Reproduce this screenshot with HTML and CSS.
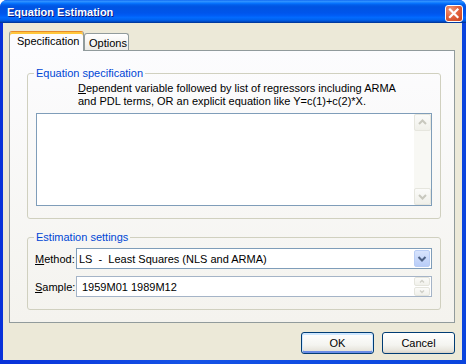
FILE: index.html
```html
<!DOCTYPE html>
<html>
<head>
<meta charset="utf-8">
<link rel="stylesheet" href="styles.css">
</head>
<body>
<div class="window">
  <div class="titlebar">
    <span class="title">Equation Estimation</span>
    <span class="close">
      <svg width="16" height="15" viewBox="0 0 16 15"><path d="M4 3.5 L11.5 11 M11.5 3.5 L4 11" stroke="#fff" stroke-width="2.2" stroke-linecap="square" fill="none"/></svg>
    </span>
  </div>
  <div class="frame">
    <div class="client">
      <div class="tabs">
        <div class="tab active">Specification</div>
        <div class="tab">Options</div>
      </div>
      <div class="panel">
        <fieldset class="group g1">
          <legend>Equation specification</legend>
          <p class="desc"><u>D</u>ependent variable followed by list of regressors including ARMA<br>and PDL terms, OR an explicit equation like Y=c(1)+c(2)*X.</p>
          <div class="textbox">
            <div class="vscroll">
              <div class="sbtn"><svg width="15" height="15" viewBox="0 0 15 15"><path d="M4 9 L7.5 5.5 L11 9" stroke="#C8C8BE" stroke-width="2" fill="none"/></svg></div>
              <div class="track"></div>
              <div class="sbtn"><svg width="15" height="15" viewBox="0 0 15 15"><path d="M4 6 L7.5 9.5 L11 6" stroke="#C8C8BE" stroke-width="2" fill="none"/></svg></div>
            </div>
          </div>
        </fieldset>
        <fieldset class="group g2">
          <legend>Estimation settings</legend>
          <div class="row">
            <label class="lbl"><u>M</u>ethod:</label>
            <div class="combo">
              <span class="val">LS  -  Least Squares (NLS and ARMA)</span>
              <span class="dd"><svg width="14" height="15" viewBox="0 0 14 15"><path d="M3.5 6 L7 9.5 L10.5 6" stroke="#4D6185" stroke-width="2" fill="none"/></svg></span>
            </div>
          </div>
          <div class="row r2">
            <label class="lbl"><u>S</u>ample:</label>
            <div class="combo sample">
              <span class="val sval">1959M01 1989M12</span>
              <span class="spin">
                <span class="sp"><svg width="14" height="7" viewBox="0 0 14 7"><path d="M5 4.5 L7 2.5 L9 4.5" stroke="#D0D0C8" stroke-width="1.3" fill="none"/></svg></span>
                <span class="sp"><svg width="14" height="7" viewBox="0 0 14 7"><path d="M5 2.5 L7 4.5 L9 2.5" stroke="#D0D0C8" stroke-width="1.3" fill="none"/></svg></span>
              </span>
            </div>
          </div>
        </fieldset>
      </div>
      <div class="buttons">
        <button class="btn default">OK</button>
        <button class="btn">Cancel</button>
      </div>
    </div>
  </div>
</div>
</body>
</html>
```

FILE: styles.css
```css
html, body {
  margin: 0;
  padding: 0;
  background: #ffffff;
}
body {
  font-family: "Liberation Sans", Arial, sans-serif;
  font-size: 11px;
  color: #000;
}
.window {
  width: 466px;
  height: 364px;
  display: flex;
  flex-direction: column;
  background: #0A3FD8;
  border-radius: 7px 7px 0 0;
  overflow: hidden;
}
.titlebar {
  height: 23px;
  flex: none;
  display: flex;
  align-items: flex-start;
  padding: 0 3px 0 7px;
  background: linear-gradient(to bottom, #0058ee 0%, #3593ff 4%, #288eff 8%, #127dff 12%, #036ffc 16%, #0262ee 20%, #0057e5 26%, #0054e3 32%, #0055eb 56%, #005bf5 66%, #026afe 76%, #0062ef 86%, #0052d6 92%, #0040ab 96%, #003092 100%);
}
.title {
  flex: 1;
  font-weight: bold;
  font-size: 11px;
  line-height: 13px;
  padding-top: 6px;
  color: #fff;
  text-shadow: 1px 1px 0 #0a1883;
}
.close {
  width: 18px;
  height: 17px;
  margin-top: 5px;
  box-sizing: border-box;
  border: 1px solid #fff;
  border-radius: 3px;
  background: radial-gradient(circle at 30% 25%, #f09a7c 0%, #e2643f 45%, #c8401c 100%);
  display: flex;
  align-items: center;
  justify-content: center;
}
.frame {
  flex: 1;
  display: flex;
  padding: 0 4px 4px 3px;
  background: linear-gradient(to right, #0831d9, #1553e6 40%, #0a44dd);
}
.client {
  flex: 1;
  display: flex;
  flex-direction: column;
  background: #ECE9D8;
  padding: 8px 7px 0 6px;
}
.tabs {
  display: flex;
  align-items: flex-end;
  height: 19px;
}
.tab {
  box-sizing: border-box;
  border: 1px solid #919B9C;
  border-bottom: none;
  border-radius: 3px 3px 0 0;
  line-height: 16px;
  padding-top: 1px;
}
.tab.active {
  width: 75px;
  height: 20px;
  margin-bottom: -1px;
  position: relative;
  z-index: 1;
  background: #FCFCFE;
  border-top-color: #E68B2C;
  box-shadow: inset 0 2px 0 #FFC73C;
  padding-left: 7px;
}
.tab:not(.active) {
  width: 45px;
  height: 17px;
  padding-left: 4px;
  background: linear-gradient(to bottom, #ffffff, #ECEBE6);
}
.panel {
  box-sizing: border-box;
  width: 446px;
  height: 273px;
  border: 1px solid #919B9C;
  background: linear-gradient(to bottom, #FCFCFE, #F4F3EE);
  padding: 16px 13px 0 17px;
}
.group {
  margin: 0;
  padding: 0 8px 12px;
  border: 1px solid #D0D0BF;
  border-radius: 3px;
  min-width: 0;
}
.group legend {
  padding: 0 2px;
  margin-left: -2px;
  color: #0046D5;
  line-height: 13px;
}
.g2 {
  margin-top: 12px;
}
.desc {
  margin: 2px 0 0;
  padding-left: 42px;
  line-height: 13px;
}
.textbox {
  margin-top: 5px;
  height: 93px;
  box-sizing: border-box;
  border: 1px solid #7F9DB9;
  background: #fff;
  display: flex;
  justify-content: flex-end;
}
.vscroll {
  width: 17px;
  display: flex;
  flex-direction: column;
  background: #F8F8F4;
}
.sbtn {
  height: 17px;
  box-sizing: border-box;
  border: 1px solid #E6E6DE;
  border-radius: 2px;
  background: linear-gradient(to bottom, #FBFBF9, #F0F0EA);
  display: flex;
  align-items: center;
  justify-content: center;
}
.track {
  flex: 1;
}
.row {
  display: flex;
  align-items: center;
  margin-top: 4px;
}
.row.r2 {
  margin-top: 7px;
}
.lbl {
  width: 40px;
  text-indent: -1px;
}
.combo {
  flex: 1;
  height: 21px;
  box-sizing: border-box;
  border: 1px solid #7F9DB9;
  background: #fff;
  display: flex;
  align-items: center;
  padding: 1px;
}
.val {
  flex: 1;
  white-space: pre;
  padding-left: 1px;
}
.sval {
  padding-left: 4px;
}
.sample {
  border-color: #A5B4C7;
}
.dd {
  width: 16px;
  height: 17px;
  box-sizing: border-box;
  border: 1px solid #B9CDF5;
  border-radius: 2px;
  background: linear-gradient(to bottom, #D8E4FD, #B9CDF8);
  display: flex;
  align-items: center;
  justify-content: center;
}
.spin {
  width: 16px;
  height: 19px;
  display: flex;
  flex-direction: column;
  justify-content: space-between;
}
.sp {
  height: 9px;
  box-sizing: border-box;
  border: 1px solid #E5E5DD;
  border-radius: 2px;
  background: linear-gradient(to bottom, #FBFBF9, #F1F1EB);
  display: flex;
  align-items: center;
  justify-content: center;
}
.buttons {
  display: flex;
  justify-content: flex-end;
  gap: 8px;
  margin-top: 9px;
  padding-right: 0;
  width: 446px;
}
.btn {
  width: 73px;
  height: 22px;
  box-sizing: border-box;
  border: 1px solid #003C74;
  border-radius: 3px;
  background: linear-gradient(to bottom, #ffffff 0%, #F4F4F0 60%, #E6E3DA 90%, #D6D0C5 100%);
  font-family: "Liberation Sans", Arial, sans-serif;
  font-size: 11px;
  color: #000;
  padding: 0;
}
.btn.default {
  box-shadow: inset 0 1px 0 1px #CEE7FF, inset 0 -1px 0 1px #6A8CE6;
}
```
